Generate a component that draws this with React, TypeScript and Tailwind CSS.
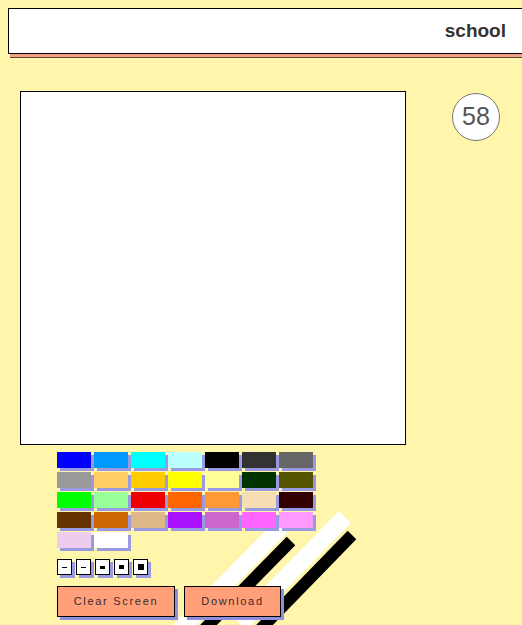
import React from "react";

const colors = [
  "#0000ff", "#0099ff", "#00ffff", "#bbffff", "#000000", "#333333", "#666666",
  "#999999", "#ffcc66", "#ffcc00", "#ffff00", "#ffff99", "#003300", "#555500",
  "#00ff00", "#99ff99", "#ee0000", "#ff6600", "#ff9933", "#f5deb3", "#330000",
  "#663300", "#cc6600", "#deb887", "#aa11ff", "#cc66cc", "#ff66ff", "#ff99ff",
  "#eeccee", "#ffffff",
];

const brushes = [
  { w: 5, h: 1 },
  { w: 5, h: 1 },
  { w: 5, h: 3 },
  { w: 5, h: 4 },
  { w: 6, h: 6 },
];

export default function App() {
  return (
    <div
      className="relative w-[522px] h-[625px] overflow-hidden bg-[#fff5ab]"
      style={{ fontFamily: '"Liberation Sans", Arial, sans-serif' }}
    >
      <svg
        className="absolute left-0 top-0 pointer-events-none"
        width="522"
        height="625"
        viewBox="0 0 522 625"
      >
        <line x1="281" y1="527" x2="176" y2="634" stroke="#ffffff" strokeWidth="17" />
        <line x1="291" y1="541" x2="182" y2="652" stroke="#000000" strokeWidth="12" />
        <line x1="345" y1="517" x2="240" y2="624" stroke="#ffffff" strokeWidth="17" />
        <line x1="352" y1="535" x2="248" y2="642" stroke="#000000" strokeWidth="12" />
      </svg>

      <div className="relative flex flex-col">
        <div className="ml-2 mt-2 flex h-[46px] w-[522px] items-center justify-end border border-black bg-white pr-[23px] shadow-[2px_2px_0_#f2a183,2px_3px_0_#f2a183,2px_4px_0_#5a4a35]">
          <span className="text-[19px] font-bold text-[#333333]">school</span>
        </div>

        <div className="mt-[37px] flex flex-row items-start">
          <div className="ml-[20px] h-[354px] w-[386px] border border-black bg-white" />
          <div className="ml-[46px] mt-[2px] flex h-[48px] w-[48px] items-center justify-center rounded-full border border-[#777777] bg-white text-[25px] text-[#555555]">
            58
          </div>
        </div>

        <div className="ml-[57px] mt-[7px] grid w-fit grid-cols-[repeat(7,34px)] gap-x-[3px] gap-y-[4px]">
          {colors.map((c, i) => (
            <div
              key={i}
              className="h-[16px] w-[34px] shadow-[3px_3px_0_#9a9ae2]"
              style={{ backgroundColor: c }}
            />
          ))}
        </div>

        <div className="ml-[57px] mt-[11px] flex flex-row gap-[4px]">
          {brushes.map((b, i) => (
            <div
              key={i}
              className="flex h-[16px] w-[15px] items-center justify-center border border-black bg-white shadow-[3px_3px_0_#9a9ae2]"
            >
              <div className="bg-black" style={{ width: b.w, height: b.h }} />
            </div>
          ))}
        </div>

        <div className="ml-[57px] mt-[11px] flex flex-row gap-[9px]">
          <button className="h-[31px] w-[118px] border border-black bg-[#ffa07a] text-[11px] tracking-[1.7px] text-[#3a2a2a] shadow-[3px_3px_0_#8f8fe0]">
            Clear Screen
          </button>
          <button className="h-[31px] w-[97px] border border-black bg-[#ffa07a] text-[11px] tracking-[1.7px] text-[#3a2a2a] shadow-[3px_3px_0_#8f8fe0]">
            Download
          </button>
        </div>
      </div>
    </div>
  );
}
